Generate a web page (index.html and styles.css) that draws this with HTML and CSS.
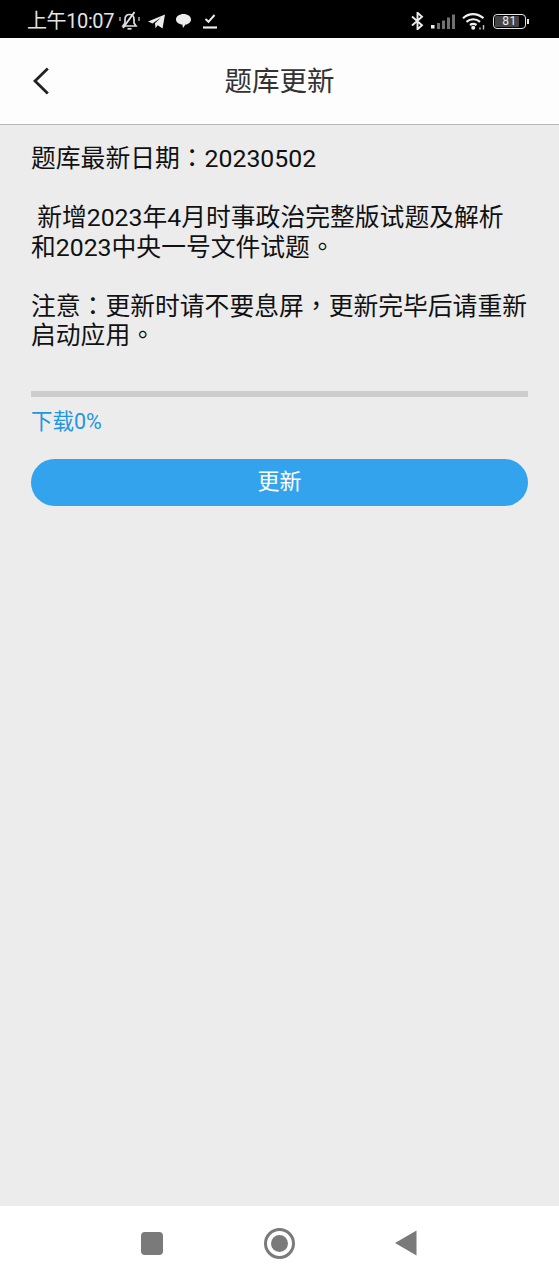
FILE: index.html
```html
<!DOCTYPE html>
<html lang="zh-CN">
<head>
<meta charset="utf-8">
<title>题库更新</title>
<link rel="stylesheet" href="styles.css">
</head>
<body>
<div class="phone">
  <div class="status">
    <div class="status-left">
      <span class="time">上午10:07</span>
      <svg class="ic" width="21" height="20" viewBox="0 0 21 20"><path d="M10.500 3.500c-3 0-4.500 2.300-4.500 4.800v3.700L4 15h13l-2-3V8.300c0-2.500-1.500-4.800-4.500-4.800z" fill="none" stroke="#e0e0e0" stroke-width="1.700"/><path d="M8.500 17.800h4" stroke="#e0e0e0" stroke-width="1.700"/><path d="M4 17 15.500 1" stroke="#e0e0e0" stroke-width="1.900"/><path d="M1 6v4M20 6v4" stroke="#aaa" stroke-width="1.500"/></svg>
      <svg class="ic ic-plane" width="17" height="15" viewBox="0 0 17 15"><path d="M0 7.500 17 .5l-2.500 14-4.800-3.300-2.200 3-.5-5L13 3.500 4.500 9.500z" fill="#ececec"/></svg>
      <svg class="ic ic-chat" width="15" height="14" viewBox="0 0 15 14"><path d="M7.500 0C11.600 0 15 2.300 15 5.400c0 2.700-2.600 4.800-5.500 5.200L7 14l-.7-3.500C3 10.200 0 8.200 0 5.400 0 2.300 3.400 0 7.500 0z" fill="#ececec"/></svg>
      <svg class="ic ic-check" width="14" height="15" viewBox="0 0 14 15"><path d="M2.500 5l3 2.800L11.500 1" fill="none" stroke="#ececec" stroke-width="2"/><path d="M0 13.500h14" stroke="#ececec" stroke-width="2.200"/></svg>
    </div>
    <div class="status-right">
      <svg width="13" height="18" viewBox="0 0 13 18"><path d="M1 4.500l10 8.700L6.500 17.300V.7L11 4.800 1 13.500" fill="none" stroke="#ececec" stroke-width="1.900"/></svg>
      <svg class="signal" width="24" height="15" viewBox="0 0 24 15"><rect x="0" y="11" width="3.500" height="3.500" fill="#f0f0f0"/><rect x="6" y="9" width="3" height="6" fill="#707070"/><rect x="11" y="6.500" width="3" height="8.500" fill="#707070"/><rect x="16" y="3.500" width="3" height="11.500" fill="#707070"/><rect x="21" y="0.500" width="3" height="14.500" fill="#707070"/></svg>
      <svg class="wifi" width="23" height="18" viewBox="0 0 23 18"><path d="M1 6.200C7 .8 15 .8 21.500 6.200M4.500 9.800c4-3.400 9.500-3.400 13.500 0M8 13c2-1.500 4.500-1.500 6.500 0" fill="none" stroke="#f0f0f0" stroke-width="2.200"/><circle cx="11.200" cy="15.700" r="2" fill="#f0f0f0"/><path d="M18 17.500v-2M21.500 17.500v-4.500" stroke="#bbb" stroke-width="1.500"/></svg>
      <div class="battery"><div class="battery-body"><span class="battery-fill"></span><span class="battery-num">81</span></div><span class="battery-tip"></span></div>
    </div>
  </div>

  <header class="topbar">
    <svg class="back" width="18" height="28" viewBox="0 0 18 28"><path d="M15.800 1.500 3 14l12.800 12.500" fill="none" stroke="#222" stroke-width="2.800"/></svg>
    <h1 class="title">题库更新</h1>
  </header>

  <main class="content">
    <p class="line">题库最新日期<span class="punct" lang="zh-TW">：</span>20230502</p>
    <p class="para">&nbsp;新增2023年4月时事政治完整版试题及解析和2023中央一号文件试题<span class="punct" lang="zh-TW">。</span></p>
    <p class="para">注意<span class="punct" lang="zh-TW">：</span>更新时请不要息屏<span class="punct" lang="zh-TW">，</span>更新完毕后请重新启动应用<span class="punct" lang="zh-TW">。</span></p>
    <div class="progress"></div>
    <div class="download">下载0%</div>
    <button class="update"><span class="update-label">更新</span></button>
  </main>

  <nav class="navbar">
    <span class="nav-square"></span>
    <span class="nav-circle"><span class="nav-dot"></span></span>
    <svg width="22" height="26" viewBox="0 0 22 26"><path d="M0 13 21.500.5v25z" fill="#7a7a7a"/></svg>
  </nav>
</div>
</body>
</html>
```
FILE: styles.css
```css
* { box-sizing: border-box; }
html, body { margin: 0; padding: 0; }
body { font-family: "Roboto", "Noto Sans CJK SC", sans-serif; }
.phone { width: 559px; height: 1280px; display: flex; flex-direction: column; background: #ececec; overflow: hidden; }
.status { height: 38px; flex: none; background: #000; color: #e4e4e4; display: flex; justify-content: space-between; align-items: center; padding: 4px 30px 0 27px; }
.status-left, .status-right { display: flex; align-items: center; }
.time { font-size: 20px; line-height: 28px; letter-spacing: -0.4px; margin-right: 5px; }
.ic { display: block; }
.ic-plane { margin-left: 8px; }
.ic-chat { margin-left: 11px; }
.ic-check { margin-left: 12px; }
.signal { margin-left: 7px; }
.wifi { margin-left: 7px; }
.battery { display: flex; align-items: center; margin-left: 8px; }
.battery-body { position: relative; width: 33px; height: 15px; border: 1.500px solid #e4e4e4; border-radius: 4px; display: flex; align-items: center; justify-content: center; }
.battery-fill { position: absolute; left: 1px; top: 1px; bottom: 1px; width: 78%; background: #444; border-radius: 1px; }
.battery-num { position: relative; font-size: 12px; line-height: 12px; color: #eee; letter-spacing: .5px; }
.battery-tip { width: 2px; height: 5px; background: #e4e4e4; margin-left: 1px; }
.topbar { height: 87px; flex: none; background: #fdfdfd; border-bottom: 1px solid #b9b9b9; display: flex; align-items: center; justify-content: center; position: relative; }
.back { position: absolute; left: 32px; top: 29px; }
.title { margin: 2px 0 0; font-size: 27.500px; font-weight: 400; color: #333; line-height: 36px; }
.content { flex: 1; padding: 19px 31px 0; color: #111; }
.line, .para { margin: 0; font-size: 24.800px; line-height: 29.500px; }
.para { margin-top: 29.500px; }
.punct { font-family: "Noto Sans CJK TC", sans-serif; line-height: 0; }
.progress { height: 6px; background: #cdcdcd; margin-top: 40px; }
.download { color: #2496e0; font-size: 21.500px; line-height: 28px; margin-top: 11px; }
.update { display: flex; align-items: center; justify-content: center; width: 100%; height: 47px; margin-top: 23px; border: 0; border-radius: 24px; background: #32a3ec; color: #fff; font: inherit; font-size: 22px; padding: 0; }
.update-label { display: block; line-height: 26px; }
.navbar { height: 74px; flex: none; background: #fff; display: flex; align-items: center; justify-content: space-between; padding: 0 142px 0 141px; }
.nav-square { width: 22px; height: 23px; border-radius: 4px; background: #7a7a7a; }
.nav-circle { width: 31px; height: 31px; border-radius: 50%; border: 3px solid #7a7a7a; display: flex; align-items: center; justify-content: center; }
.nav-dot { width: 17px; height: 17px; border-radius: 50%; background: #7a7a7a; }
```
